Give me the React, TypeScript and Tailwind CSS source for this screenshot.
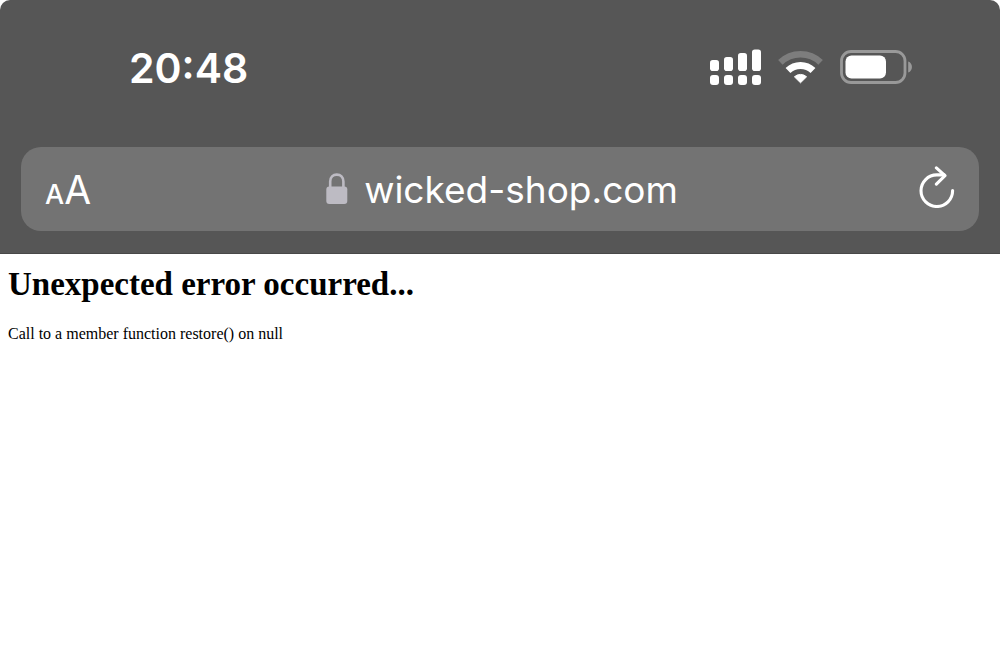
import React from "react";

const SignalIcon = () => (
  <svg width="52" height="36" viewBox="0 0 52 36" fill="#fff" aria-hidden="true">
    <rect x="0" y="11" width="9" height="11" rx="2.8" />
    <rect x="14" y="8" width="9" height="14" rx="2.8" />
    <rect x="28" y="4" width="9" height="18" rx="2.8" />
    <rect x="42" y="0.5" width="9" height="21.5" rx="2.8" />
    <rect x="0" y="26" width="9" height="10" rx="3" />
    <rect x="14" y="26" width="9" height="10" rx="3" />
    <rect x="28" y="26" width="9" height="10" rx="3" />
    <rect x="42" y="26" width="9" height="10" rx="3" />
  </svg>
);

const WifiIcon = () => (
  <svg width="46" height="34" viewBox="0 0 46 34" fill="none" aria-hidden="true">
    <path d="M2.4 12.4A29 29 0 0 1 42.6 12.4" stroke="#7d7d7d" strokeWidth="6.5" />
    <path d="M10 20.6A18 18 0 0 1 35 20.6" stroke="#fff" strokeWidth="7" />
    <path
      d="M16.4 26.8A9 9 0 0 1 28.6 26.8L22.5 32.8Z"
      fill="#fff"
      stroke="#fff"
      strokeLinejoin="round"
    />
  </svg>
);

const BatteryIcon = () => (
  <svg width="72" height="34" viewBox="0 0 72 34" fill="none" aria-hidden="true">
    <rect x="1.5" y="1.5" width="63.5" height="31" rx="9.5" stroke="#999" strokeWidth="2.8" />
    <rect x="5.5" y="5.5" width="40.5" height="23" rx="6" fill="#fff" />
    <path d="M68.2 11.5C73.2 13 73.2 21 68.2 22.5Z" fill="#999" />
  </svg>
);

const LockIcon = () => (
  <svg width="22" height="32" viewBox="0 0 22 32" fill="none" aria-hidden="true">
    <path
      d="M4.2 14.5V8.5C4.2 4 7 1.6 10.8 1.6S17.4 4 17.4 8.5V14.5"
      stroke="#bdbbc3"
      strokeWidth="2.6"
    />
    <rect x="0.3" y="13.5" width="21" height="17.5" rx="3" fill="#bdbbc3" />
  </svg>
);

const ReloadIcon = () => (
  <svg
    width="36"
    height="42"
    viewBox="0 0 36 42"
    fill="none"
    stroke="#fff"
    strokeWidth="3.1"
    strokeLinecap="round"
    strokeLinejoin="round"
    aria-hidden="true"
  >
    <path d="M33.6 24.6A15.8 15.8 0 1 1 17.8 8.9H25.2" />
    <path d="M17.4 1.9L26 9.6L17.4 18.2" />
  </svg>
);

const StatusBar = () => {
  return (
    <div className="flex h-[147px] items-center justify-between pb-[13px] pl-[129px] pr-[88px]">
      <time className="pt-0.5 text-[41px] font-semibold leading-none">20:48</time>
      <div className="flex items-center gap-4">
        <SignalIcon />
        <WifiIcon />
        <BatteryIcon />
      </div>
    </div>
  );
};

const AddressBar = () => {
  return (
    <div className="flex h-[84px] items-center justify-between rounded-[20px] bg-[#737373] px-6">
      <button
        type="button"
        aria-label="Page settings"
        className="flex flex-1 items-baseline leading-none"
      >
        <span className="text-[27px] font-medium">A</span>
        <span className="text-[39px]">A</span>
      </button>
      <a href="#" className="flex items-center gap-4 pl-1 text-[37px] leading-none">
        <LockIcon />
        wicked-shop.com
      </a>
      <div className="flex flex-1 justify-end">
        <button type="button" aria-label="Reload" className="pb-1">
          <ReloadIcon />
        </button>
      </div>
    </div>
  );
};

const App = () => {
  return (
    <div className="min-h-screen bg-white">
      <header className="rounded-t-[10px] border-b border-[#484848] bg-[#565656] px-[21px] pb-[22px] font-['Inter',sans-serif] text-white">
        <div className="-mx-[21px]">
          <StatusBar />
        </div>
        <AddressBar />
      </header>
      <main className="px-2 py-3 font-['Liberation_Serif',serif] text-black">
        <h1 className="text-[33px] font-bold leading-9">
          Unexpected error occurred...
        </h1>
        <p className="mt-5 text-base leading-6">
          Call to a member function restore() on null
        </p>
      </main>
    </div>
  );
};

export default App;
